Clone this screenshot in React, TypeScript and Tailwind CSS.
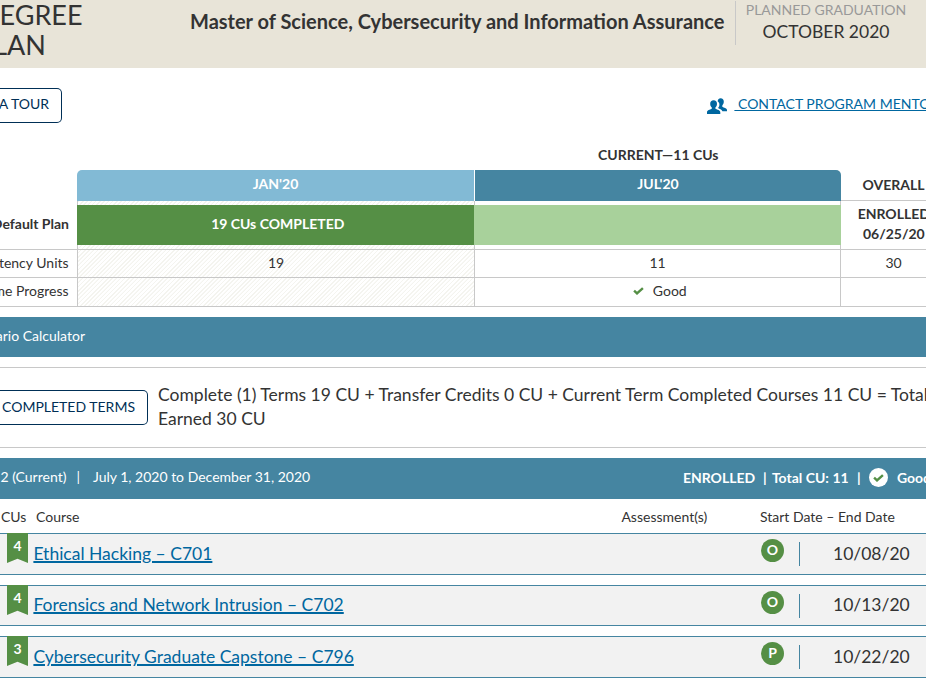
import React from 'react';

function Check({ className }: { className?: string }) {
  return (
    <svg viewBox="0 0 11 8" className={className} fill="none" aria-hidden="true">
      <path d="M1.1 3.7 4 6.4 9.9 1.1" stroke="#558f45" strokeWidth="2.4" />
    </svg>
  );
}

function People() {
  return (
    <svg viewBox="0 0 20 16" className="h-4 w-5 shrink-0" fill="#0067a0" aria-hidden="true">
      <path d="M10.6 3.3C10.9 1.3 12 .3 13.6.3c2.1 0 3.2 1.3 3.2 3.3 0 1.600-.6 2.900-1.500 3.800v1.300c1.600.9 4.400 1.600 4.700 3.100v1.400h-4.600c-.8-1.500-2.700-2.200-4.400-3.100.9-1 1.400-2.200 1.400-3.600 0-1.400-.6-2.400-1.800-3.200Z" />
      <path d="M6.600 2.300c2.200 0 3.400 1.400 3.400 3.500 0 1.600-.6 2.900-1.600 3.700v1.300c2 .9 4.900 1.500 4.900 3.400V16H0v-1.800c0-1.900 2.900-2.500 4.800-3.400V9.500c-1-.8-1.600-2.100-1.600-3.700 0-2.100 1.200-3.500 3.400-3.500Z" />
    </svg>
  );
}

const hatch =
  'bg-[repeating-linear-gradient(135deg,#fff_0px,#fff_1.7px,#f4f4ef_2.1px,#f4f4ef_3px)]';

type Course = {
  units: number;
  name: string;
  kind: string;
  date: string;
  size: string;
  text: string;
};

const courses: Course[] = [
  { units: 4, name: 'Ethical Hacking – C701', kind: 'O', date: '10/08/20', size: 'h-[42px]', text: 'pt-[6px]' },
  { units: 4, name: 'Forensics and Network Intrusion – C702', kind: 'O', date: '10/13/20', size: 'h-[41px]', text: 'pt-[5px]' },
  { units: 3, name: 'Cybersecurity Graduate Capstone – C796', kind: 'P', date: '10/22/20', size: 'h-[42px]', text: 'pt-[6px]' },
];

function CourseRow({ course }: { course: Course }) {
  return (
    <div className={`flex border-y border-[#4585a1] bg-[#f2f2f2] pl-[7px] ${course.size}`}>
      <div className="-mt-px h-[30px] w-[21px] shrink-0 bg-[#558f45] pt-[4px] text-center text-[14px] leading-[18px] font-bold text-white [clip-path:polygon(0_0,100%_0,100%_100%,50%_86%,0_100%)]">
        {course.units}
      </div>
      <div className={`ml-[5.4px] w-[727.6px] shrink-0 text-[17.5px] leading-[27px] ${course.text}`}>
        <a href="#course" className="text-[#0067a0] underline decoration-2">
          {course.name}
        </a>
      </div>
      <div className="mt-[5px] flex size-[23px] shrink-0 items-center justify-center rounded-full bg-[#558f45] pb-px text-[14px] leading-none font-bold text-white">
        {course.kind}
      </div>
      <div className="mt-2 ml-[15px] h-6 w-px shrink-0 bg-[#4585a1]" />
      <div className={`ml-[33px] text-[17.5px] leading-[27px] ${course.text}`}>{course.date}</div>
    </div>
  );
}

export default function App() {
  return (
    <div className="h-[682px] w-[926px] overflow-hidden bg-white font-[Lato,sans-serif] text-[14px] leading-5 whitespace-nowrap text-[#333]">
      <header className="flex h-[68px] bg-[#e8e4d8]">
        <div className="flex w-[190px] shrink-0 flex-col text-[27px] leading-[30px]">
          <div className="flex w-[82.500px] justify-end">DEGREE</div>
          <div className="flex w-[46px] justify-end">PLAN</div>
        </div>
        <h1 className="w-[545px] shrink-0 pt-[8px] text-[20px] leading-[26px] font-bold">
          Master of Science, Cybersecurity and Information Assurance
        </h1>
        <div className="mt-px h-[44px] w-[181px] border-l border-[#c8c8c8] text-center">
          <div className="text-[14px] leading-[18px] text-[#999]">PLANNED GRADUATION</div>
          <div className="text-[17.5px] leading-[25px]">OCTOBER 2020</div>
        </div>
      </header>

      <div className="flex h-[77px] justify-between pt-5">
        <button className="flex h-[35px] w-[62px] items-center justify-end rounded-r-[5px] border border-l-0 border-[#002f56] pr-3 pb-[3px] text-[#002f56]">
          TAKE A TOUR
        </button>
        <div className="flex w-[219px] pt-[6px] text-[#0067a0]">
          <span className="pt-[4px]"><People /></span>
          <a href="#mentor" className="ml-[7.4px] whitespace-pre underline"> CONTACT PROGRAM MENTOR</a>
        </div>
      </div>

      <section className="h-[172px]">
        <div className="flex h-[25px]">
          <div className="ml-[475px] w-[366.500px] text-center font-bold">CURRENT—11 CUs</div>
        </div>
        <div className="flex">
          <div className="w-[77px] shrink-0 border-b border-[#c8c8c8] text-right">
            <div className="flex h-[80px] items-end justify-end border-b border-[#c8c8c8] pr-2 pb-[15px] font-bold">Default Plan</div>
            <div className="flex h-[28px] items-center justify-end border-b border-[#c8c8c8] pr-[8.4px] pb-px">Competency Units</div>
            <div className="flex h-[28px] items-center justify-end pr-[8.4px] pb-[2px]">On-Time Progress</div>
          </div>
          <div className={`flex w-[397px] shrink-0 flex-col border-b border-[#c8c8c8] text-center ${hatch}`}>
            <div className="h-[31px] rounded-tl-[5px] bg-[#82bad5] pt-1 font-bold text-white shadow-[-2px_-2px_0_#fff]">JAN'20</div>
            <div className="h-1 border-l border-[#c8c8c8]" />
            <div className="flex h-10 items-center justify-center bg-[#558f45] pb-0.5 pl-[4.500px] font-bold text-white">19 CUs COMPLETED</div>
            <div className="h-1 border-l border-[#c8c8c8]" />
            <div className="h-[28px] border-t border-l border-[#c8c8c8] pt-[3px]">19</div>
            <div className="h-[29px] border-t border-l border-[#c8c8c8]" />
          </div>
          <div className="flex w-[367px] shrink-0 flex-col border-b border-[#c8c8c8] text-center">
            <div className="h-[31px] rounded-tr-[5px] border-l border-white bg-[#4585a1] pt-1 font-bold text-white">JUL'20</div>
            <div className="h-1 border-x border-[#c8c8c8]" />
            <div className="h-10 bg-[#a8d19b]" />
            <div className="h-1 border-x border-[#c8c8c8]" />
            <div className="h-[28px] border-x border-t border-[#c8c8c8] pt-[3px]">11</div>
            <div className="flex h-[29px] items-center justify-center border-x border-t border-[#c8c8c8] pb-[2px] pl-[5px]">
              <Check className="mr-[8.500px] h-2 w-[11px]" />
              Good
            </div>
          </div>
          <div className="flex w-[105px] shrink-0 flex-col border-b border-[#c8c8c8] text-center font-bold">
            <div className="h-[31px] border-b border-[#c8c8c8] pt-[5px]">OVERALL</div>
            <div className="flex h-12 flex-col items-center pt-[3px] pl-[0.6px]">
              <span>ENROLLED</span>
              <span>06/25/20</span>
            </div>
            <div className="h-[28px] border-t border-[#c8c8c8] pt-[3px] font-normal">30</div>
            <div className="h-[29px] border-t border-[#c8c8c8]" />
          </div>
        </div>
      </section>

      <div className="h-10 bg-[#4585a1] text-white">
        <div className="flex h-full w-[85px] items-center justify-end pb-0.5">Scenario Calculator</div>
      </div>

      <section className="mt-[10px] flex h-[81px] border-y border-[#c8c8c8]">
        <button className="mt-[22px] flex h-[35px] w-[148px] shrink-0 items-center justify-end rounded-r-[5px] border border-l-0 border-[#002f56] pr-3 pb-px text-[#002f56]">
          COMPLETED TERMS
        </button>
        <p className="ml-[10px] pt-[15px] text-[17.5px] leading-6">
          Complete (1) Terms 19 CU + Transfer Credits 0 CU + Current Term Completed Courses 11 CU = Total
          <br />
          Earned 30 CU
        </p>
      </section>

      <div className="mt-[10px] flex h-[41px] bg-[#4585a1] pt-[9px] text-white">
        <div className="flex w-[66.400px] shrink-0 justify-end">Term 2 (Current)</div>
        <span className="ml-[10px]">|</span>
        <span className="ml-[13px] w-[590px] shrink-0">July 1, 2020 to December 31, 2020</span>
        <div className="flex pt-px font-bold">
          <span className="w-[80px] shrink-0">ENROLLED</span>
          <span className="w-[9px] shrink-0">|</span>
          <span className="w-[85px] shrink-0">Total CU: 11</span>
          <span className="w-[12px] shrink-0">|</span>
          <span className="flex size-[19px] shrink-0 items-center justify-center rounded-full bg-white"><Check className="h-2 w-[11px]" /></span>
          <span className="ml-[9px]">Good</span>
        </div>
      </div>

      <div className="flex h-[34px] pt-2">
        <span className="w-[36px] pl-px">CUs</span>
        <span className="w-[585px]">Course</span>
        <span className="w-[139px] pl-[0.4px]">Assessment(s)</span>
        <span>Start Date – End Date</span>
      </div>
      <div className="flex flex-col gap-[10px]">
        {courses.map((course) => (
          <CourseRow key={course.name} course={course} />
        ))}
      </div>
    </div>
  );
}
